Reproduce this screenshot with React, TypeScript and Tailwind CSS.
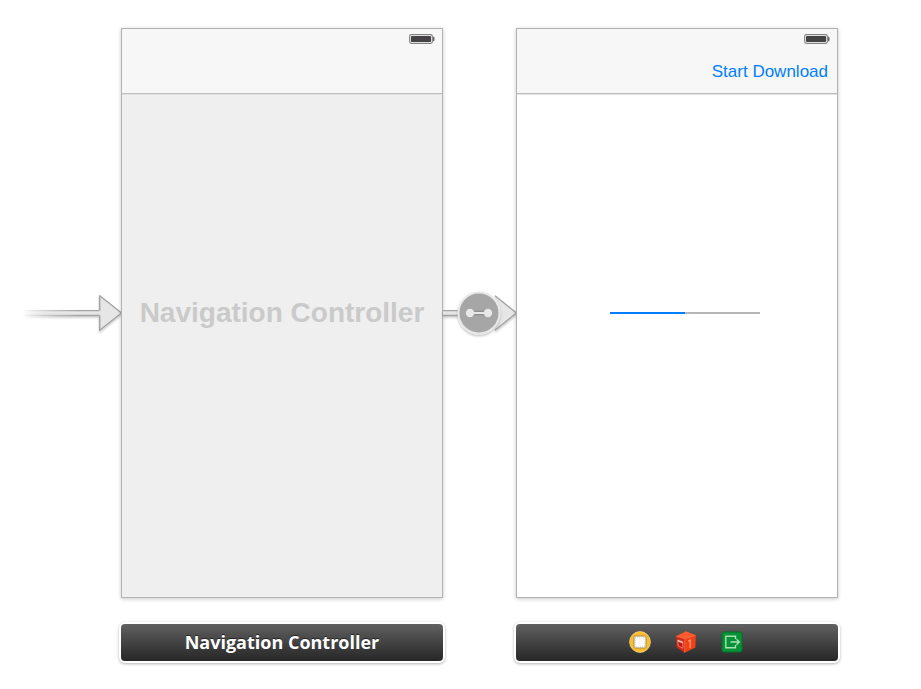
import React from "react";

const Battery = () => (
  <svg width="26" height="10" viewBox="0 0 26 10" aria-label="Battery full">
    <rect x="0.7" y="0.7" width="22.6" height="8.6" rx="1.5" fill="#fff" stroke="#828282" strokeWidth="1.2" />
    <rect x="2" y="2" width="20" height="6" rx="0.4" fill="#454345" />
    <path d="M24 2.8h0.8q0.7 0.4 0.7 1v2.4q0 0.6-0.7 1H24z" fill="#666" />
  </svg>
);

const EntryArrow = () => (
  <svg className="w-full overflow-visible" viewBox="0 0 97 54" aria-hidden="true">
    <defs>
      <linearGradient id="entryLine" gradientUnits="userSpaceOnUse" x1="-2" y1="0" x2="55" y2="0">
        <stop offset="0" stopColor="#a4a4a4" stopOpacity="0" />
        <stop offset="1" stopColor="#a4a4a4" />
      </linearGradient>
      <linearGradient id="entryFill" gradientUnits="userSpaceOnUse" x1="-2" y1="0" x2="40" y2="0">
        <stop offset="0" stopColor="#e6e6e6" stopOpacity="0" />
        <stop offset="1" stopColor="#e6e6e6" />
      </linearGradient>
      <filter id="entryShadow" x="-20%" y="-20%" width="140%" height="150%">
        <feDropShadow dx="0" dy="1.5" stdDeviation="1.3" floodOpacity="0.25" />
      </filter>
    </defs>
    <g filter="url(#entryShadow)">
      <path d="M0 24H76V30H0z" fill="url(#entryFill)" />
      <path d="M0 24H76V25.3H0zM0 28.7H76V30H0z" fill="url(#entryLine)" />
      <path
        d="M75.7 24.6V9.8L97.5 27L75.7 44.2V29.4"
        fill="#e6e6e6"
        stroke="#a4a4a4"
        strokeWidth="1.4"
        strokeLinejoin="round"
      />
    </g>
  </svg>
);

const Segue = () => (
  <svg className="w-full overflow-visible" viewBox="0 0 73 54" aria-hidden="true">
    <defs>
      <filter id="segueShadow" x="-20%" y="-20%" width="140%" height="150%">
        <feDropShadow dx="0" dy="1.5" stdDeviation="1.3" floodOpacity="0.25" />
      </filter>
    </defs>
    <g filter="url(#segueShadow)">
      <path d="M0 24H20V30H0z" fill="#e6e6e6" />
      <path d="M0 24H20V25.3H0zM0 28.7H20V30H0z" fill="#a4a4a4" />
      <path
        d="M52 9.8L73.5 27L52 44.2"
        fill="#e6e6e6"
        stroke="#a4a4a4"
        strokeWidth="1.4"
        strokeLinejoin="round"
      />
    </g>
    <circle cx="36" cy="27" r="20.5" fill="#a6a6a6" stroke="#e8e8e8" strokeWidth="2" filter="url(#segueShadow)" />
    <path d="M27 27H45" stroke="#8f8f8f" strokeWidth="4.6" />
    <circle cx="27" cy="27" r="4.2" fill="#e8e8e8" />
    <circle cx="45" cy="27" r="4.2" fill="#e8e8e8" />
    <path d="M27 27H45" stroke="#e8e8e8" strokeWidth="2" />
  </svg>
);

const ControllerIcon = () => (
  <svg width="22" height="22" viewBox="0 0 22 22">
    <circle cx="11" cy="11" r="10.4" fill="#f9bd2c" stroke="#fbd984" strokeWidth="0.8" />
    <rect x="5" y="5" width="12" height="12" rx="1" fill="#fff" stroke="#b08d45" strokeWidth="1" />
    <rect x="6" y="6" width="10" height="10" fill="none" stroke="#b9b2a4" strokeWidth="1" strokeDasharray="1 1" />
    <rect x="6.8" y="6.8" width="8.4" height="8.4" fill="#fff" />
  </svg>
);

const ResponderIcon = () => (
  <svg width="22" height="22" viewBox="0 0 22 22">
    <path d="M11 0.3L20.8 4.2L9.6 7.8L1 5.2z" fill="#ff5a2c" />
    <path d="M1 5.2L9.6 7.8V21.8L1.6 16.5z" fill="#d0271a" />
    <path d="M9.6 7.8L20.8 4.2L20.4 16.4L9.6 21.8z" fill="#f04216" />
    <path d="M2.8 9L7.8 10.8V17.3L3 14.5z" fill="#b91c12" stroke="#f09080" strokeWidth="0.8" />
    <path d="M2.8 9L7.8 10.8V12.4L2.8 10.6z" fill="#ffc0b0" />
    <path d="M13.2 10.2L15.2 9V17" fill="none" stroke="#ff9a70" strokeWidth="1.2" />
    <path d="M1 5.2L9.6 7.8L20.8 4.2M9.6 7.8V21.8" fill="none" stroke="#ff8058" strokeWidth="0.6" />
  </svg>
);

const ExitIcon = () => (
  <svg width="22" height="22" viewBox="0 0 22 22">
    <rect x="1" y="1" width="20" height="20" rx="2" fill="#079238" stroke="#087029" />
    <path
      d="M14.5 8V5.2H4.8V16.8H14.5V14M9.5 11H18M15.5 8.3L18.3 11L15.5 13.7"
      fill="none"
      stroke="#a9e0ae"
      strokeWidth="1.4"
    />
  </svg>
);

const dockItems = [
  { name: "View Controller", Icon: ControllerIcon },
  { name: "First Responder", Icon: ResponderIcon },
  { name: "Exit", Icon: ExitIcon },
];

const Screen = ({
  className,
  action,
  children,
}: {
  className: string;
  action?: string;
  children: React.ReactNode;
}) => (
  <section
    className={`grid aspect-[322/570] border border-[#b2b2b2] shadow-[0_1px_4px_rgba(0,0,0,0.22)] ${className}`}
  >
    <header className="col-start-1 row-start-1 flex h-[65px] flex-col items-end self-start border-b border-[#bdbdbd] bg-[#f7f7f7] pt-[5px] shadow-[0_1px_0_#e3e3e3]">
      <div className="pr-[7px]">
        <Battery />
      </div>
      {action && (
        <button className="mt-auto mb-[11px] pr-[9px] text-[17px] leading-5 text-[#007eff]">{action}</button>
      )}
    </header>
    <div className="col-start-1 row-start-1 flex items-center justify-center self-center">{children}</div>
  </section>
);

const Dock = ({ children }: { children: React.ReactNode }) => (
  <div className="flex h-[37px] items-center justify-center gap-6 rounded bg-linear-to-b from-[#616161] to-[#272727] pb-[2px] shadow-[0_0_0_2px_#fff,0_1px_3px_2px_rgba(0,0,0,0.3)]">
    {children}
  </div>
);

const App = () => {
  return (
    <main className="min-h-screen bg-white pt-7 pr-[83px] pb-7 pl-6 font-['Liberation_Sans',Arial,sans-serif]">
      <div className="grid grid-cols-[97px_1fr_73px_1fr] items-center gap-y-[26px]">
        <EntryArrow />
        <Screen className="bg-[#efefef]">
          <h2 className="text-[28px] leading-8 font-bold whitespace-nowrap text-[#cacaca]">Navigation Controller</h2>
        </Screen>
        <Segue />
        <Screen className="bg-white" action="Start Download">
          <div className="pl-4">
            <div
              role="progressbar"
              aria-label="Download progress"
              aria-valuenow={50}
              className="h-[2px] w-[150px] bg-[#b6b6b6]"
            >
              <div className="h-full w-1/2 bg-[#007eff]" />
            </div>
          </div>
        </Screen>

        <div className="col-start-2">
          <Dock>
            <h3 className="font-['Open_Sans','Noto_Sans',sans-serif] text-[18px] leading-6 font-bold whitespace-nowrap text-white text-shadow-[0_-1px_0_#222]">
              Navigation Controller
            </h3>
          </Dock>
        </div>
        <div className="col-start-4">
          <Dock>
            <div className="flex gap-6 pl-[18px]">
              {dockItems.map(({ name, Icon }) => (
                <button key={name} aria-label={name}>
                  <Icon />
                </button>
              ))}
            </div>
          </Dock>
        </div>
      </div>
    </main>
  );
};

export default App;
